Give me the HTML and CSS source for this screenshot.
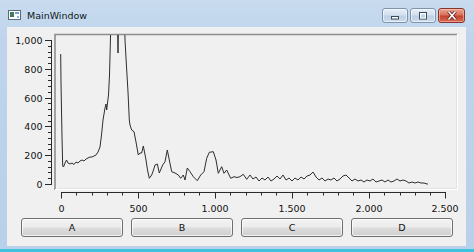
FILE: index.html
```html
<!DOCTYPE html>
<html>
<head>
<meta charset="utf-8">
<link rel="stylesheet" href="styles.css">
</head>
<body>
<div class="window">
  <div class="titlebar">
    <svg class="app-icon" width="13" height="10" viewBox="0 0 13 10">
      <rect x="0.5" y="0.5" width="12" height="9" fill="#ffffff" stroke="#5a6b78"/>
      <rect x="2" y="2" width="4" height="5" fill="#3f7a5a"/>
      <rect x="7" y="2" width="4" height="2" fill="#6fa0d8"/>
      <rect x="9" y="6" width="2" height="2" fill="#8fb8e0"/>
    </svg>
    <span class="title">MainWindow</span>
    <div class="controls">
      <div class="cbtn">
        <svg width="12" height="8" viewBox="0 0 12 8"><rect x="2.5" y="4.5" width="7" height="2.5" fill="#fff" stroke="#3a4a5e"/></svg>
      </div>
      <div class="cbtn">
        <svg width="12" height="8" viewBox="0 0 12 8"><rect x="2.5" y="0.5" width="7" height="6.5" fill="none" stroke="#3a4a5e"/><rect x="3.5" y="1.5" width="5" height="4.5" fill="none" stroke="#fff"/><rect x="4.5" y="3.5" width="3" height="1.5" fill="#b8c9dd"/></svg>
      </div>
      <div class="cbtn close">
        <svg width="14" height="9" viewBox="0 0 14 9"><path d="M3.5 0.5 L10.5 8.5 M10.5 0.5 L3.5 8.5" stroke="#5b1a12" stroke-width="3.2"/><path d="M3.5 0.5 L10.5 8.5 M10.5 0.5 L3.5 8.5" stroke="#fff" stroke-width="1.6"/></svg>
      </div>
    </div>
  </div>
  <div class="client">
    <svg class="plot" width="459" height="187" viewBox="7 27 459 187">
      <defs>
        <clipPath id="cv"><rect x="56" y="35" width="401" height="154"/></clipPath>
      </defs>
      <rect x="55" y="34" width="403" height="156" fill="#f0f0f0"/>
      <path d="M55 190 V34.5 H458" fill="none" stroke="#8e8e8e" stroke-width="1.6"/>
      <path d="M57.5 188.5 H456.5 V35" fill="none" stroke="#e2e2e2"/>
      <path d="M55 189.5 H457.5 V34" fill="none" stroke="#ffffff"/>
      <polyline clip-path="url(#cv)" class="curve" points="60.7,54 61,82 61.5,110 62,137 62.7,166 63.5,167 65,163 66.5,160 68,163 70,164 72,163 74,164.5 76,162 78,163 80,161 82,160 84,161 86,159 88,158 90,157 92,157 94,156 96,155 98,152 100,147 101.5,135 103,120 105,108 106,104 106.7,110 107.5,103 108.5,95 109.5,75 110,56 110.7,30 111,20 117.5,20 118,53 118.5,20 124.5,20 125,40 126,58 127,75 128,92 129.3,120 130,125 131.7,130 134,131.7 136,142 138.3,155 140,153 141.7,153 143.3,146 144.5,152 146,160 147.5,170 149.3,178.3 151.7,175 153.5,170 155,165 157.3,164 159.3,173 161,169 162.7,165 165,161.7 167.3,150 169.3,160 171.7,171.7 175,173 178.3,175 180.7,178.3 183.3,175 185,180 187.3,168 190,171.7 193.3,176.7 197.3,180.7 200.7,175 204,171.7 206.7,158.3 209.3,152.3 213.3,151.7 216,160 218.3,173.3 221.7,166.7 224,173.3 226.7,170 230.7,178.3 234,176.7 237,177.5 240,176.7 243.3,174.3 246.7,179.3 250,175 253,179 256,177 259,181 262,178 265,180 268,177 271,181 274,179 277,176 280,179 283,175 286,180 289,178 292,181 295,178 298,180 301,177 304,179 307,176 310,175 313,172 316,177 319,180 322,178 325,181 328,179 331,180 334,178 337,181 340,179 343,176 346,175 349,178 352,181 355,179 358,181 361,180 364,182 367,180 370,181 373,179 376,182 379,181 382,180 385,182 388,180 391,182 394,181 397,179 400,181 403,180 406,181 409,183 412,182 415,183 418,182 421,183 424,183 427,184 428,184"/>
      <path class="axis" d="M51.5 40 V184.5
        M45 40.5 H52 M45 69.5 H52 M45 98.5 H52 M45 126.5 H52 M45 155.5 H52 M45 184.5 H52
        M48 46.5 H52 M48 52.5 H52 M48 57.5 H52 M48 63.5 H52
        M48 75.5 H52 M48 80.5 H52 M48 86.5 H52 M48 92.5 H52
        M48 103.5 H52 M48 109.5 H52 M48 115.5 H52 M48 121.5 H52
        M48 132.5 H52 M48 138.5 H52 M48 144.5 H52 M48 149.5 H52
        M48 161.5 H52 M48 167.5 H52 M48 172.5 H52 M48 178.5 H52"/>
      <path class="axis" d="M61 192.5 H446
        M61.5 192 V198.5 M138.5 192 V198.5 M215.5 192 V198.5 M292.5 192 V198.5 M369.5 192 V198.5 M445.5 192 V198.5
        M76.5 192 V195.5 M92.5 192 V195.5 M107.5 192 V195.5 M122.5 192 V195.5
        M153.5 192 V195.5 M169.5 192 V195.5 M184.5 192 V195.5 M199.5 192 V195.5
        M230.5 192 V195.5 M246.5 192 V195.5 M261.5 192 V195.5 M276.5 192 V195.5
        M307.5 192 V195.5 M323.5 192 V195.5 M338.5 192 V195.5 M353.5 192 V195.5
        M384.5 192 V195.5 M400.5 192 V195.5 M415.5 192 V195.5 M430.5 192 V195.5"/>
      <g class="ylab">
        <text x="42.5" y="43.5">1,000</text>
        <text x="42.5" y="72.5">800</text>
        <text x="42.5" y="101.5">600</text>
        <text x="42.5" y="130">400</text>
        <text x="42.5" y="159">200</text>
        <text x="42.5" y="188">0</text>
      </g>
      <g class="xlab">
        <text x="61.5" y="211.5">0</text>
        <text x="138.5" y="211.5">500</text>
        <text x="215" y="211.5">1.000</text>
        <text x="292" y="211.5">1.500</text>
        <text x="369" y="211.5">2.000</text>
        <text x="445" y="211.5">2.500</text>
      </g>
    </svg>
    <div class="buttons">
      <button class="btn">A</button>
      <button class="btn">B</button>
      <button class="btn">C</button>
      <button class="btn">D</button>
    </div>
  </div>
  <div class="bottom-edge"></div>
</div>
</body>
</html>
```

FILE: styles.css
```css
html, body {
  margin: 0;
  padding: 0;
}
body {
  width: 474px;
  height: 252px;
  overflow: hidden;
  font-family: "DejaVu Sans", sans-serif;
  font-size: 9.5px;
}
.window {
  width: 474px;
  height: 252px;
  display: flex;
  flex-direction: column;
  background: linear-gradient(to bottom, #c8dbef 0px, #bfd4ec 40px, #b9d0ea 252px);
}
.titlebar {
  height: 27px;
  display: flex;
  align-items: flex-start;
  padding-left: 8px;
  padding-right: 9px;
}
.app-icon {
  margin-top: 10px;
  display: block;
}
.title {
  margin-left: 6px;
  margin-top: 10px;
  line-height: 12px;
  color: #101820;
}
.controls {
  margin-left: auto;
  margin-top: 8px;
  display: flex;
  gap: 2px;
}
.cbtn {
  width: 24px;
  height: 13px;
  border: 1px solid #7f93ad;
  border-radius: 3px;
  background: linear-gradient(to bottom, #e6eef8 0%, #d3e0ef 45%, #bfd0e4 55%, #cddcee 100%);
  box-shadow: inset 0 0 0 1px rgba(255,255,255,0.55);
  display: flex;
  align-items: center;
  justify-content: center;
}
.cbtn svg {
  display: block;
}
.cbtn.close {
  width: 25px;
  border-color: #8a3328;
  background: linear-gradient(to bottom, #e9a493 0%, #d9725d 45%, #c4432f 55%, #d66a52 100%);
  box-shadow: inset 0 0 0 1px rgba(255,210,200,0.5);
}
.client {
  margin-left: 7px;
  margin-right: 8px;
  height: 219px;
  background: #f0f0f0;
  display: flex;
  flex-direction: column;
}
.plot {
  display: block;
}
.curve {
  fill: none;
  stroke: #2e2e2e;
  stroke-width: 1;
}
.axis {
  fill: none;
  stroke: #2a2a2a;
  stroke-width: 1;
}
.ylab text {
  font-family: "DejaVu Sans", sans-serif;
  font-size: 9.5px;
  fill: #111;
  text-anchor: end;
}
.xlab text {
  font-family: "DejaVu Sans", sans-serif;
  font-size: 9.5px;
  fill: #111;
  text-anchor: middle;
}
.buttons {
  display: flex;
  gap: 8px;
  margin-top: 4px;
  padding-left: 14px;
  padding-right: 13px;
}
.btn {
  flex: 1;
  height: 19px;
  margin: 0;
  padding: 0;
  border: 1px solid #707070;
  border-radius: 3px;
  background: linear-gradient(to bottom, #f3f3f3 0%, #ebebeb 48%, #dddddd 52%, #cfcfcf 100%);
  box-shadow: inset 0 0 0 1px rgba(255,255,255,0.7);
  font-family: "DejaVu Sans", sans-serif;
  font-size: 9.5px;
  color: #111;
  line-height: 17px;
}
.bottom-edge {
  margin-top: auto;
  height: 3px;
  background: #3fc3dc;
}
```
